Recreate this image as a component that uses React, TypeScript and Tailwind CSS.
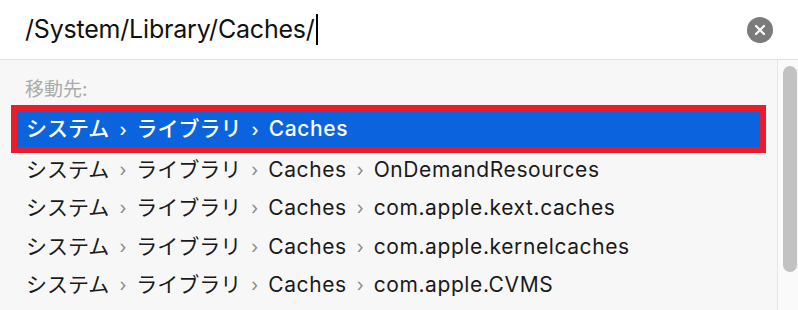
import React from 'react';

const rows = [
  'OnDemandResources',
  'com.apple.kext.caches',
  'com.apple.kernelcaches',
  'com.apple.CVMS',
];

function Sep({ selected }: { selected?: boolean }) {
  return (
    <span className={`mx-[10px] text-[18px] ${selected ? 'text-white' : 'text-[#8a8a8a]'}`}>›</span>
  );
}

export default function App() {
  const font = { fontFamily: 'Inter, "Noto Sans CJK JP", sans-serif' };
  return (
    <div className="relative w-[798px] h-[310px] overflow-hidden bg-white flex flex-col" style={font}>
      {/* search field */}
      <div className="h-[60px] shrink-0 flex items-center pl-[25px] pr-[25px] border-b border-[#e2e2e2]">
        <span className="text-[25px] text-[#111] tracking-[-0.2px]">/System/Library/Caches/</span>
        <span className="w-[2px] h-[31px] bg-black ml-[1px]" />
        <div className="ml-auto w-[26px] h-[26px] rounded-full bg-[#7b7b7b] flex items-center justify-center">
          <svg width="12" height="12" viewBox="0 0 12 12">
            <path d="M2 2 L10 10 M10 2 L2 10" stroke="white" strokeWidth="2.2" strokeLinecap="round" />
          </svg>
        </div>
      </div>

      <div className="flex flex-1">
        {/* results */}
        <div className="flex-1 bg-[#f7f7f7] pt-[20px]">
          <div className="h-[20px] pl-[25px] flex items-center text-[19px] text-[#ababab]">移動先:</div>
          <div className="h-[11px]" />
          <div className="mx-[17px] h-[36px] bg-[#0b64dd] outline-[6px] outline-solid outline-[#e81c2a] flex items-center pl-[9px] text-[21px] text-white font-medium">
            <span>システム</span>
            <Sep selected />
            <span>ライブラリ</span>
            <Sep selected />
            <span className="tracking-[0.6px]">Caches</span>
          </div>
          <div className="h-[3px]" />
          {rows.map((r) => (
            <div key={r} className="mx-[17px] h-[38.5px] flex items-center pl-[9px] text-[21px] text-[#1a1a1a]">
              <span>システム</span>
              <Sep />
              <span>ライブラリ</span>
              <Sep />
              <span className="tracking-[0.6px]">Caches</span>
              <Sep />
              <span className="tracking-[0.6px]">{r}</span>
            </div>
          ))}
        </div>

        {/* scroll track */}
        <div className="w-[21px] shrink-0 bg-[#fafafa] border-l border-[#e6e6e6] pt-[6px] pl-[5px]">
          <div className="w-[14px] h-[206px] rounded-full bg-[#c2c2c2]" />
        </div>
      </div>
    </div>
  );
}
